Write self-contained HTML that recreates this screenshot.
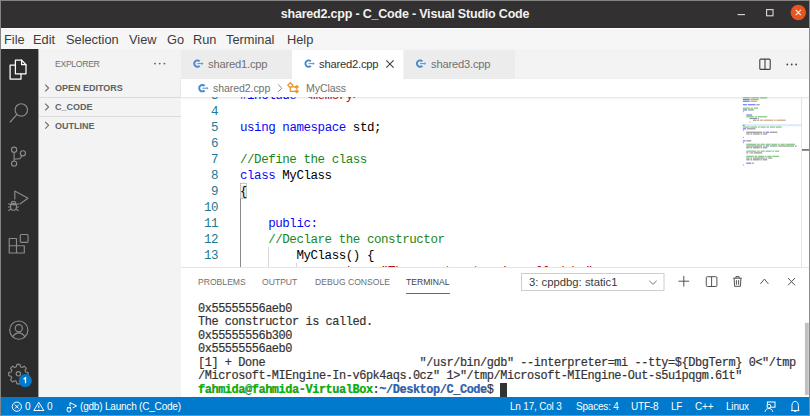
<!DOCTYPE html>
<html><head><meta charset="utf-8">
<style>
*{margin:0;padding:0;box-sizing:border-box}
html,body{width:810px;height:416px;overflow:hidden;background:#fff;font-family:"Liberation Sans",sans-serif}
.abs{position:absolute}
svg{position:absolute;overflow:visible}
#title{left:0;top:0;width:810px;height:28px;background:#323030;border-top:1px solid #848484}
#title .t{position:absolute;left:0;width:810px;top:6px;text-align:center;color:#f2f2f2;font-weight:bold;font-size:12.5px;letter-spacing:-0.2px}
#menu{left:0;top:28px;width:810px;height:21px;background:#f6f6f6;border-top:1px solid #fdfdfd}
#menu span{position:absolute;top:3px;font-size:12.8px;color:#3c3c3c}
#act{left:0;top:49px;width:38px;height:348px;background:#2c2c2c}
#side{left:38px;top:49px;width:143px;height:348px;background:#f3f3f3}
#side .h{position:absolute;font-size:9px;color:#616161}
#side .sep{position:absolute;left:0;width:143px;height:1px;background:#dcdcdc}
#tabs{left:181px;top:49px;width:629px;height:30px;background:#f3f3f3}
.tab{position:absolute;top:1px;height:29px;background:#ececec}
.tab .n{position:absolute;top:8px;font-size:11.2px;letter-spacing:-0.2px;color:#717171}
#crumb{left:181px;top:79px;width:629px;height:18px;background:#fff}
#editor{left:181px;top:79.8px;width:629px;height:187.2px;background:#fff;overflow:hidden}
.mono{font-family:"Liberation Mono",monospace}
.ln{position:absolute;left:0;width:37px;text-align:right;font-family:"Liberation Mono",monospace;font-size:12.5px;letter-spacing:-0.45px;line-height:16px;color:#237893}
.cl{position:absolute;left:59px;font-family:"Liberation Mono",monospace;font-size:12.5px;letter-spacing:-0.45px;line-height:16px;color:#000;white-space:pre}
.kw{color:#0a0af5}.cm{color:#1a861a}.st{color:#a31515}
#panel{left:181px;top:267px;width:629px;height:130px;background:#fff;border-top:1px solid #e5e5e5}
.pt{position:absolute;top:9px;font-size:8.6px;color:#6f6f6f}
#term{position:absolute;left:17px;top:34.5px;-webkit-text-stroke:0.2px #333;font-family:"Liberation Mono",monospace;font-size:11.9px;letter-spacing:-0.42px;line-height:13.6px;color:#333;white-space:pre}
#status{left:0;top:397px;width:810px;height:19px;background:#007acc;color:#fff}
#status span{position:absolute;top:4px;font-size:10px;letter-spacing:-0.2px;color:#fff}
</style></head><body>
<div id="title" class="abs"><div class="t">shared2.cpp - C_Code - Visual Studio Code</div></div>
<svg style="left:0;top:0" width="810" height="27">
<line x1="737.6" y1="14.6" x2="745" y2="14.6" stroke="#dcdcdc" stroke-width="1.1"/>
<rect x="766.6" y="9.6" width="6.4" height="6.2" fill="none" stroke="#dcdcdc" stroke-width="1.1"/>
<circle cx="798.3" cy="12.5" r="7.7" fill="#e95420"/>
<path d="M795.7 9.9l5.2 5.2M800.9 9.9l-5.2 5.2" stroke="#fbeede" stroke-width="1.1"/>
</svg>
<div id="menu" class="abs">
<span style="left:4px">File</span><span style="left:33px">Edit</span><span style="left:66px">Selection</span><span style="left:129px">View</span><span style="left:167px">Go</span><span style="left:193px">Run</span><span style="left:226px">Terminal</span><span style="left:287px">Help</span>
</div>
<div id="act" class="abs"></div>
<svg style="left:0;top:0" width="38" height="416" fill="none" stroke-linecap="round" stroke-linejoin="round">
<g stroke="#ffffff" stroke-width="1.25">
<path d="M15.4 60.2H21.6L26 64.6V73.8H15.4Z"/>
<path d="M21.6 60.2V64.6H26"/>
<path d="M15.4 65.2H10.1V79H21V73.8"/>
</g>
<g stroke="#8b8b8b" stroke-width="1.15">
<circle cx="21.3" cy="109.9" r="6.2"/>
<path d="M16.8 114.6L10.2 122"/>
<circle cx="14.1" cy="149.7" r="2.6"/>
<circle cx="14.1" cy="163.6" r="2.6"/>
<circle cx="22.9" cy="153.3" r="2.6"/>
<path d="M14.1 152.3V161M14.1 159.2L19.8 158.6L22 155.8"/>
<path d="M14.8 199V191L28 198.3L19.9 204"/>
<path d="M11.2 203.6A2.3 2.4 0 0 1 15.8 203.6"/><ellipse cx="13.5" cy="206.8" rx="3" ry="3.4"/>
<path d="M10.5 204.6H16.5M8.6 203.8L10.3 204.6M18.4 203.8L16.7 204.6M8.4 207H10.4M16.6 207H18.6M8.8 210.4L10.6 209.2M18.2 210.4L16.4 209.2"/>
<path d="M9.2 238.5H16.5V253H9.2ZM9.2 245.7H24.3V253H16.5"/>
<rect x="20.3" y="234.5" width="7.8" height="7.8" rx="1"/>
<circle cx="18.8" cy="330.1" r="9.1"/>
<circle cx="18.8" cy="328.2" r="3.6"/>
<path d="M12.8 336.6C14.5 334 16.5 332.8 18.8 332.8S23.1 334 24.8 336.6"/>
<path d="M16.9 364.4h3l.6 2.4 1.6.7 2.1-1.3 2.1 2.1-1.3 2.1.7 1.6 2.4.6v3l-2.4.6-.7 1.6 1.3 2.1-2.1 2.1-2.1-1.3-1.6.7-.6 2.4h-3l-.6-2.4-1.6-.7-2.1 1.3-2.1-2.1 1.3-2.1-.7-1.6-2.4-.6v-3l2.4-.6.7-1.6-1.3-2.1 2.1-2.1 2.1 1.3 1.6-.7z"/>
<circle cx="18.4" cy="373.8" r="2.2"/>
</g>
<circle cx="25.3" cy="380.6" r="6.6" fill="#007acc" stroke="none"/>
<path d="M23.6 379.1L25.5 377.8V383.3" stroke="#fff" stroke-width="1.3" stroke-linecap="butt" stroke-linejoin="miter"/>
</svg>
<div id="side" class="abs">
<div class="h" style="left:17px;top:10px;font-size:8.7px;letter-spacing:-0.35px;color:#6f6f6f">EXPLORER</div>

<div class="h" style="left:17px;top:34px;font-weight:bold">OPEN EDITORS</div>
<div class="sep" style="top:48px"></div>
<div class="h" style="left:17px;top:53px;font-weight:bold">C_CODE</div>
<div class="sep" style="top:67px"></div>
<div class="h" style="left:17px;top:71.5px;font-weight:bold">OUTLINE</div>
</div>
<svg style="left:0;top:0" width="200" height="140" fill="none" stroke="#6b6b6b" stroke-width="1.1">
<path d="M45.2 84.6L48.6 88L45.2 91.4M45.2 103.6L48.6 107L45.2 110.4M45.2 121.9L48.6 125.3L45.2 128.7"/>
<g fill="#616161" stroke="none"><circle cx="155" cy="63.6" r="0.95"/><circle cx="159.7" cy="63.6" r="0.95"/><circle cx="164.4" cy="63.6" r="0.95"/></g>
</svg>
<div id="tabs" class="abs">
<div class="tab" style="left:0;width:111px"><span class="n" style="left:27px">shared1.cpp</span></div>
<div class="tab" style="left:111px;width:111px;background:#fff"><span class="n" style="left:27px;color:#333">shared2.cpp</span></div>
<div class="tab" style="left:223px;width:111px"><span class="n" style="left:27px">shared3.cpp</span></div>
</div>
<div id="editor" class="abs">
<div class="ln" style="top:8px">3</div><div class="cl" style="top:8px"><span class="kw">#include</span> <span class="st">&lt;memory&gt;</span></div>
<div class="ln" style="top:24px">4</div>
<div class="ln" style="top:40px">5</div><div class="cl" style="top:40px"><span class="kw">using</span> <span class="kw">namespace</span> std;</div>
<div class="ln" style="top:56px">6</div>
<div class="ln" style="top:72px">7</div><div class="cl cm" style="top:72px">//Define the class</div>
<div class="ln" style="top:88px">8</div><div class="cl" style="top:88px"><span class="kw">class</span> MyClass</div>
<div class="ln" style="top:104px">9</div><div class="cl" style="top:104px"><span style="background:#ececec">{</span></div>
<div class="ln" style="top:120px">10</div>
<div class="ln" style="top:136px">11</div><div class="cl" style="top:136px">    <span class="kw">public:</span></div>
<div class="ln" style="top:152px">12</div><div class="cl cm" style="top:152px">    //Declare the constructor</div>
<div class="ln" style="top:168px">13</div><div class="cl" style="top:168px">        MyClass() {</div>
<div class="cl" style="top:184px">            cout &lt;&lt; <span class="st">"The constructor is called.\n"</span>;</div>
</div>
<div id="crumb" class="abs" style="box-shadow:0 1px 2px rgba(0,0,0,0.12)"><span style="position:absolute;left:32px;top:3px;font-size:10.6px;letter-spacing:-0.1px;color:#717171">shared2.cpp</span><span style="position:absolute;left:125px;top:3px;font-size:10.6px;letter-spacing:-0.1px;color:#717171">MyClass</span></div>
<svg style="left:0;top:0" width="810" height="300"><rect x="742" y="124" width="59" height="2.3" fill="#dfecf9"/><rect x="742.90" y="97.25" width="7.56" height="1.2" fill="#4caf4c" opacity="0.7"/><rect x="751.30" y="97.25" width="7.56" height="1.2" fill="#4caf4c" opacity="0.7"/><rect x="759.70" y="97.25" width="7.56" height="1.2" fill="#4caf4c" opacity="0.7"/><rect x="742.90" y="98.97" width="6.72" height="1.2" fill="#3d3dff" opacity="0.7"/><rect x="750.46" y="98.97" width="8.40" height="1.2" fill="#c07a4a" opacity="0.7"/><rect x="742.90" y="100.69" width="6.72" height="1.2" fill="#3d3dff" opacity="0.7"/><rect x="750.46" y="100.69" width="6.72" height="1.2" fill="#c07a4a" opacity="0.7"/><rect x="742.90" y="104.13" width="4.20" height="1.2" fill="#3d3dff" opacity="0.7"/><rect x="747.94" y="104.13" width="7.56" height="1.2" fill="#3d3dff" opacity="0.7"/><rect x="756.34" y="104.13" width="3.36" height="1.2" fill="#6a6a6a" opacity="0.7"/><rect x="742.90" y="107.57" width="6.72" height="1.2" fill="#4caf4c" opacity="0.7"/><rect x="750.46" y="107.57" width="2.52" height="1.2" fill="#4caf4c" opacity="0.7"/><rect x="753.82" y="107.57" width="4.20" height="1.2" fill="#4caf4c" opacity="0.7"/><rect x="742.90" y="109.29" width="4.20" height="1.2" fill="#3d3dff" opacity="0.7"/><rect x="747.94" y="109.29" width="5.88" height="1.2" fill="#6a6a6a" opacity="0.7"/><rect x="742.90" y="111.01" width="0.84" height="1.2" fill="#6a6a6a" opacity="0.7"/><rect x="746.26" y="114.45" width="5.88" height="1.2" fill="#3d3dff" opacity="0.7"/><rect x="746.26" y="116.17" width="7.56" height="1.2" fill="#4caf4c" opacity="0.7"/><rect x="754.66" y="116.17" width="2.52" height="1.2" fill="#4caf4c" opacity="0.7"/><rect x="758.02" y="116.17" width="9.24" height="1.2" fill="#4caf4c" opacity="0.7"/><rect x="749.62" y="117.89" width="7.56" height="1.2" fill="#6a6a6a" opacity="0.7"/><rect x="758.02" y="117.89" width="0.84" height="1.2" fill="#6a6a6a" opacity="0.7"/><rect x="752.98" y="119.61" width="3.36" height="1.2" fill="#6a6a6a" opacity="0.7"/><rect x="757.18" y="119.61" width="1.68" height="1.2" fill="#6a6a6a" opacity="0.7"/><rect x="759.70" y="119.61" width="3.36" height="1.2" fill="#c07a4a" opacity="0.7"/><rect x="763.90" y="119.61" width="9.24" height="1.2" fill="#c07a4a" opacity="0.7"/><rect x="773.98" y="119.61" width="1.68" height="1.2" fill="#c07a4a" opacity="0.7"/><rect x="776.50" y="119.61" width="9.24" height="1.2" fill="#c07a4a" opacity="0.7"/><rect x="749.62" y="121.33" width="0.84" height="1.2" fill="#6a6a6a" opacity="0.7"/><rect x="742.90" y="124.77" width="1.68" height="1.2" fill="#6a6a6a" opacity="0.7"/><rect x="742.90" y="126.49" width="6.72" height="1.2" fill="#4caf4c" opacity="0.7"/><rect x="750.46" y="126.49" width="6.72" height="1.2" fill="#4caf4c" opacity="0.7"/><rect x="758.02" y="126.49" width="1.68" height="1.2" fill="#4caf4c" opacity="0.7"/><rect x="760.54" y="126.49" width="5.04" height="1.2" fill="#4caf4c" opacity="0.7"/><rect x="766.42" y="126.49" width="2.52" height="1.2" fill="#4caf4c" opacity="0.7"/><rect x="769.78" y="126.49" width="5.04" height="1.2" fill="#4caf4c" opacity="0.7"/><rect x="775.66" y="126.49" width="5.88" height="1.2" fill="#4caf4c" opacity="0.7"/><rect x="742.90" y="128.21" width="3.36" height="1.2" fill="#3d3dff" opacity="0.7"/><rect x="747.10" y="128.21" width="8.40" height="1.2" fill="#6a6a6a" opacity="0.7"/><rect x="742.90" y="129.93" width="0.84" height="1.2" fill="#6a6a6a" opacity="0.7"/><rect x="746.26" y="131.65" width="15.96" height="1.2" fill="#6a6a6a" opacity="0.7"/><rect x="763.06" y="131.65" width="1.68" height="1.2" fill="#6a6a6a" opacity="0.7"/><rect x="765.58" y="131.65" width="3.36" height="1.2" fill="#3d3dff" opacity="0.7"/><rect x="769.78" y="131.65" width="7.56" height="1.2" fill="#6a6a6a" opacity="0.7"/><rect x="746.26" y="133.37" width="3.36" height="1.2" fill="#6a6a6a" opacity="0.7"/><rect x="750.46" y="133.37" width="1.68" height="1.2" fill="#6a6a6a" opacity="0.7"/><rect x="752.98" y="133.37" width="6.72" height="1.2" fill="#6a6a6a" opacity="0.7"/><rect x="760.54" y="133.37" width="1.68" height="1.2" fill="#6a6a6a" opacity="0.7"/><rect x="763.06" y="133.37" width="4.20" height="1.2" fill="#6a6a6a" opacity="0.7"/><rect x="742.90" y="136.81" width="0.84" height="1.2" fill="#6a6a6a" opacity="0.7"/><rect x="742.90" y="140.25" width="2.52" height="1.2" fill="#3d3dff" opacity="0.7"/><rect x="746.26" y="140.25" width="5.04" height="1.2" fill="#6a6a6a" opacity="0.7"/><rect x="742.90" y="141.97" width="0.84" height="1.2" fill="#6a6a6a" opacity="0.7"/><rect x="746.26" y="143.69" width="10.08" height="1.2" fill="#4caf4c" opacity="0.7"/><rect x="757.18" y="143.69" width="2.52" height="1.2" fill="#4caf4c" opacity="0.7"/><rect x="760.54" y="143.69" width="4.20" height="1.2" fill="#4caf4c" opacity="0.7"/><rect x="765.58" y="143.69" width="5.04" height="1.2" fill="#4caf4c" opacity="0.7"/><rect x="771.46" y="143.69" width="5.88" height="1.2" fill="#4caf4c" opacity="0.7"/><rect x="778.18" y="143.69" width="1.68" height="1.2" fill="#4caf4c" opacity="0.7"/><rect x="780.70" y="143.69" width="4.20" height="1.2" fill="#4caf4c" opacity="0.7"/><rect x="785.74" y="143.69" width="9.24" height="1.2" fill="#4caf4c" opacity="0.7"/><rect x="746.26" y="145.41" width="15.96" height="1.2" fill="#6a6a6a" opacity="0.7"/><rect x="763.06" y="145.41" width="1.68" height="1.2" fill="#6a6a6a" opacity="0.7"/><rect x="765.58" y="145.41" width="3.36" height="1.2" fill="#3d3dff" opacity="0.7"/><rect x="769.78" y="145.41" width="7.56" height="1.2" fill="#6a6a6a" opacity="0.7"/><rect x="778.18" y="145.41" width="15.96" height="1.2" fill="#6a6a6a" opacity="0.7"/><rect x="794.98" y="145.41" width="1.68" height="1.2" fill="#6a6a6a" opacity="0.7"/><rect x="746.26" y="147.13" width="3.36" height="1.2" fill="#6a6a6a" opacity="0.7"/><rect x="750.46" y="147.13" width="1.68" height="1.2" fill="#6a6a6a" opacity="0.7"/><rect x="752.98" y="147.13" width="6.72" height="1.2" fill="#6a6a6a" opacity="0.7"/><rect x="760.54" y="147.13" width="1.68" height="1.2" fill="#6a6a6a" opacity="0.7"/><rect x="763.06" y="147.13" width="4.20" height="1.2" fill="#6a6a6a" opacity="0.7"/><rect x="746.26" y="150.57" width="10.08" height="1.2" fill="#4caf4c" opacity="0.7"/><rect x="757.18" y="150.57" width="2.52" height="1.2" fill="#4caf4c" opacity="0.7"/><rect x="760.54" y="150.57" width="4.20" height="1.2" fill="#4caf4c" opacity="0.7"/><rect x="765.58" y="150.57" width="5.88" height="1.2" fill="#4caf4c" opacity="0.7"/><rect x="772.30" y="150.57" width="1.68" height="1.2" fill="#4caf4c" opacity="0.7"/><rect x="774.82" y="150.57" width="4.20" height="1.2" fill="#4caf4c" opacity="0.7"/><rect x="746.26" y="152.29" width="1.68" height="1.2" fill="#6a6a6a" opacity="0.7"/><rect x="748.78" y="152.29" width="0.84" height="1.2" fill="#6a6a6a" opacity="0.7"/><rect x="750.46" y="152.29" width="2.52" height="1.2" fill="#6a6a6a" opacity="0.7"/><rect x="753.82" y="152.29" width="8.40" height="1.2" fill="#6a6a6a" opacity="0.7"/><rect x="746.26" y="155.73" width="7.56" height="1.2" fill="#4caf4c" opacity="0.7"/><rect x="754.66" y="155.73" width="2.52" height="1.2" fill="#4caf4c" opacity="0.7"/><rect x="758.02" y="155.73" width="5.88" height="1.2" fill="#4caf4c" opacity="0.7"/><rect x="764.74" y="155.73" width="1.68" height="1.2" fill="#4caf4c" opacity="0.7"/><rect x="767.26" y="155.73" width="4.20" height="1.2" fill="#4caf4c" opacity="0.7"/><rect x="772.30" y="155.73" width="6.72" height="1.2" fill="#4caf4c" opacity="0.7"/><rect x="746.26" y="157.45" width="3.36" height="1.2" fill="#6a6a6a" opacity="0.7"/><rect x="750.46" y="157.45" width="1.68" height="1.2" fill="#6a6a6a" opacity="0.7"/><rect x="752.98" y="157.45" width="11.76" height="1.2" fill="#6a6a6a" opacity="0.7"/><rect x="765.58" y="157.45" width="1.68" height="1.2" fill="#6a6a6a" opacity="0.7"/><rect x="768.10" y="157.45" width="4.20" height="1.2" fill="#6a6a6a" opacity="0.7"/><rect x="746.26" y="159.17" width="3.36" height="1.2" fill="#6a6a6a" opacity="0.7"/><rect x="750.46" y="159.17" width="1.68" height="1.2" fill="#6a6a6a" opacity="0.7"/><rect x="752.98" y="159.17" width="6.72" height="1.2" fill="#6a6a6a" opacity="0.7"/><rect x="760.54" y="159.17" width="1.68" height="1.2" fill="#6a6a6a" opacity="0.7"/><rect x="763.06" y="159.17" width="4.20" height="1.2" fill="#6a6a6a" opacity="0.7"/><rect x="746.26" y="162.61" width="5.04" height="1.2" fill="#3d3dff" opacity="0.7"/><rect x="752.14" y="162.61" width="1.68" height="1.2" fill="#6a6a6a" opacity="0.7"/><rect x="742.90" y="164.33" width="0.84" height="1.2" fill="#6a6a6a" opacity="0.7"/><line x1="801.5" y1="97" x2="801.5" y2="267" stroke="#e4e4e4"/>
<rect x="802" y="149.2" width="7" height="1.4" fill="#555"/>
<rect x="240.4" y="183.3" width="5.9" height="15" fill="none" stroke="#b4b4b4" stroke-width="0.8"/>
<line x1="240.5" y1="198.4" x2="240.5" y2="267" stroke="#8a8a8a"/>
<line x1="268.5" y1="247" x2="268.5" y2="267" stroke="#d8d8d8"/>
<line x1="296.5" y1="263" x2="296.5" y2="267" stroke="#d8d8d8"/>
</svg>

<svg style="left:0;top:0" width="810" height="300" fill="none">
<path d="M199.66 61.34A3.2 3.2 0 1 0 199.66 65.86" stroke="#4289cf" stroke-width="1.9" fill="none"/><path d="M197.4 63.6H201.7" stroke="#4289cf" stroke-width="0.9"/><path d="M201.7 62.2L203.4 63.6L201.7 65.0Z" fill="#4289cf"/><path d="M310.86 61.34A3.2 3.2 0 1 0 310.86 65.86" stroke="#4289cf" stroke-width="1.9" fill="none"/><path d="M308.6 63.6H312.9" stroke="#4289cf" stroke-width="0.9"/><path d="M312.9 62.2L314.6 63.6L312.9 65.0Z" fill="#4289cf"/><path d="M422.36 61.34A3.2 3.2 0 1 0 422.36 65.86" stroke="#4289cf" stroke-width="1.9" fill="none"/><path d="M420.1 63.6H424.4" stroke="#4289cf" stroke-width="0.9"/><path d="M424.4 62.2L426.1 63.6L424.4 65.0Z" fill="#4289cf"/><path d="M204.66 85.94A3.2 3.2 0 1 0 204.66 90.46" stroke="#4289cf" stroke-width="1.9" fill="none"/><path d="M202.4 88.2H206.7" stroke="#4289cf" stroke-width="0.9"/><path d="M206.7 86.8L208.4 88.2L206.7 89.6Z" fill="#4289cf"/>
<path d="M386.3 60.3L393.6 67.6M393.6 60.3L386.3 67.6" stroke="#424242" stroke-width="1.1"/>
<path d="M278.2 84.6L281.8 88.2L278.2 91.8" stroke="#8a8a8a" stroke-width="1"/>
<g stroke="#e8952a" stroke-width="1.3" stroke-linejoin="round">
<path d="M287.8 85.2L290.3 82.7L292.8 85.2L290.3 87.7Z"/>
<path d="M291.5 86.8L296.8 86.8M290.3 87.7V91.3H296.8"/>
<path d="M296.8 85.6L298.2 87L296.8 88.4L295.4 87Z"/>
<path d="M296.8 89.9L298.2 91.3L296.8 92.7L295.4 91.3Z"/>
</g>
<g stroke="#424242" stroke-width="1.1">
<rect x="759.8" y="59.1" width="10.4" height="10.3" rx="1"/>
<path d="M765 59.1V69.4"/>
</g>
<g fill="#424242"><circle cx="787.3" cy="64.5" r="0.9"/><circle cx="791.7" cy="64.5" r="0.9"/><circle cx="796.1" cy="64.5" r="0.9"/></g>
</svg>
<div id="panel" class="abs">
<span class="pt" style="left:17px">PROBLEMS</span><span class="pt" style="left:81px">OUTPUT</span><span class="pt" style="left:134px">DEBUG CONSOLE</span><span class="pt" style="left:225px;color:#424242">TERMINAL</span>
<div id="term">0x55555556aeb0
The constructor is called.
0x55555556b300
0x55555556aeb0
[1] + Done                       "/usr/bin/gdb" --interpreter=mi --tty=${DbgTerm} 0&lt;"/tmp
/Microsoft-MIEngine-In-v6pk4aqs.0cz" 1&gt;"/tmp/Microsoft-MIEngine-Out-s5u1pqgm.61t"
<b style="color:#00bc00">fahmida@fahmida-VirtualBox</b>:<b style="color:#2a66c0">~/Desktop/C_Code</b>$ <span style="background:#333">&#160;</span></div>
</div>
<svg style="left:0;top:0" width="810" height="416" fill="none">
<line x1="406" y1="293.5" x2="450" y2="293.5" stroke="#6a6a6a" stroke-width="1"/>
<rect x="521.5" y="273.5" width="142.5" height="17" fill="#fff" stroke="#cecece"/>
<text x="529" y="286.3" fill="#3b3b3b" font-size="11.3" font-family="Liberation Sans">3: cppdbg: static1</text>
<path d="M649.3 280.8L653 284.3L656.7 280.8" stroke="#7a7a7a" stroke-width="1"/>
<g stroke="#4a4a4a" stroke-width="0.95">
<path d="M683.8 275.9V286.6M678.4 281.2H689.2"/>
<rect x="706.3" y="276.7" width="10.6" height="9.8" rx="1"/>
<path d="M711.6 276.7V286.5"/>
<path d="M733.2 278.2H741.8M735.9 278.2V276.6H739.1V278.2M734.1 278.2L734.6 286.3H740.4L740.9 278.2M736.4 280.2V284.8M738.6 280.2V284.8"/>
<path d="M760.4 283.9L764.4 279.1L768.4 283.9"/>
<path d="M788 278L795 285.3M795 278L788 285.3"/>
</g>
<rect x="804.9" y="322.8" width="3.9" height="72.2" fill="#c1c1c1"/>
</svg>
<div id="status" class="abs">
<span style="left:25px">0</span><span style="left:47px">0</span><span style="left:80px">(gdb) Launch (C_Code)</span>
<span style="left:510px">Ln 17, Col 3</span><span style="left:576px">Spaces: 4</span><span style="left:631px">UTF-8</span><span style="left:671px">LF</span><span style="left:695px">C++</span><span style="left:726px">Linux</span>
</div>
<svg style="left:0;top:0" width="810" height="416" fill="none">
<g stroke="#fff" stroke-width="1">
<circle cx="16.85" cy="406.7" r="4.6"/>
<path d="M14.9 404.7L18.8 408.6M18.8 404.7L14.9 408.6"/>
<path d="M38.8 402.3L43.8 410.5H33.8Z"/>
<path d="M38.8 405.2V408M38.8 408.8V409.5"/>
<path d="M70 406.2V402.6L76.6 405.9L72.6 407.9"/>
<ellipse cx="69" cy="409.8" rx="2" ry="2.2"/><path d="M67 407.6H71"/>
<rect x="767.4" y="402" width="7.6" height="5.2"/>
<circle cx="768.9" cy="406.2" r="1.9" fill="#007acc"/>
<path d="M765 411.8C765.5 409.5 767 408.5 768.9 408.5S772.3 409.5 772.8 411.8"/>
<path d="M791 410.6H799.4M792 410.6V405.5C792 402.9 793.5 401.4 795.2 401.4S798.4 402.9 798.4 405.5V410.6M794.2 411.4H796.2"/>
</g>
</svg>
<div class="abs" style="left:0;top:0;width:1px;height:416px;background:#848484"></div>
<div class="abs" style="left:38px;top:49px;width:1px;height:348px;background:#6a6a6a;opacity:0.6"></div>
<div class="abs" style="left:809px;top:0;width:1px;height:416px;background:#8a8a8a"></div>
<div class="abs" style="left:0;top:415px;width:810px;height:1px;background:#8a8a8a"></div>
</body></html>
